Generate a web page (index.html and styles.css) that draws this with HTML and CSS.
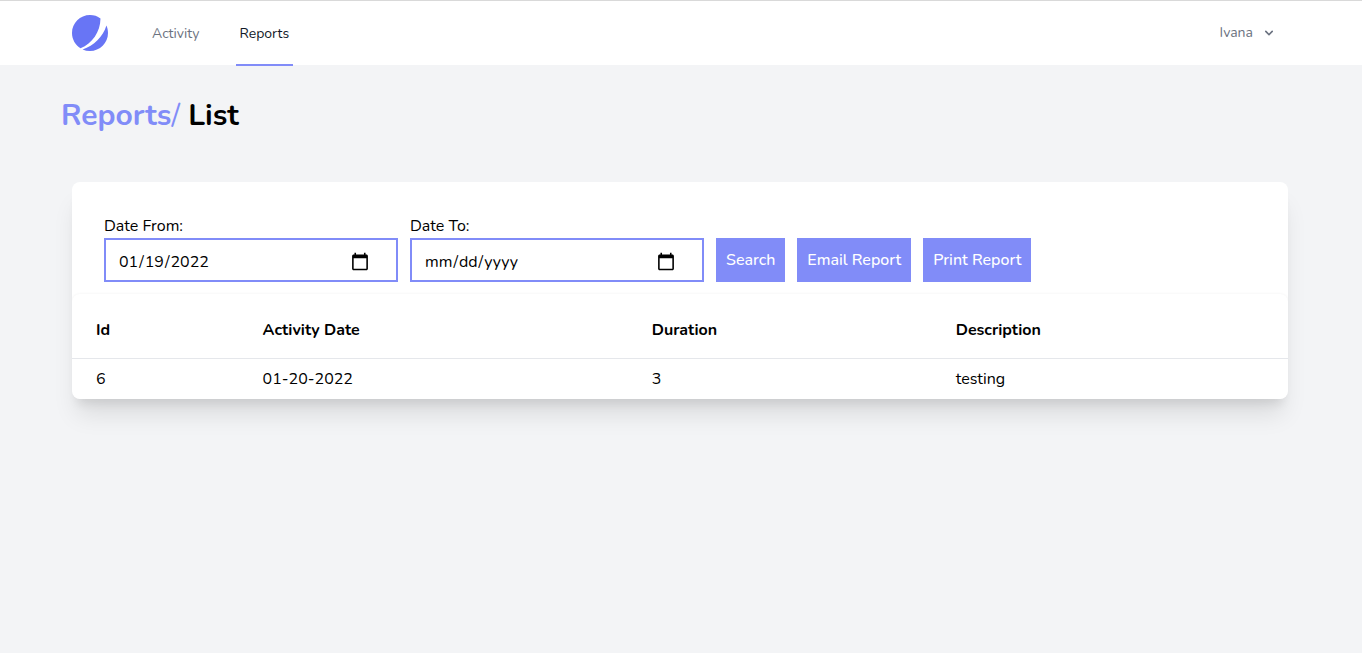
FILE: index.html
```html
<!DOCTYPE html>
<html lang="en-US">
<head>
<meta charset="utf-8">
<meta name="viewport" content="width=device-width, initial-scale=1">
<title>Reports</title>
<link rel="stylesheet" href="styles.css">
</head>
<body>
<nav class="nav">
  <div class="container nav-inner">
    <a class="logo" href="#" aria-label="Home">
      <svg viewBox="0 0 48 48" fill="#6875f5" aria-hidden="true">
        <path d="M11.395 44.428C4.557 40.198 0 32.632 0 24 0 10.745 10.745 0 24 0a23.891 23.891 0 0113.997 4.502c-.2 17.907-11.097 33.245-26.602 39.926z"/>
        <path d="M14.134 45.885A23.914 23.914 0 0024 48c13.255 0 24-10.745 24-24 0-3.516-.756-6.856-2.115-9.866-4.659 15.143-16.608 27.092-31.75 31.751z"/>
      </svg>
    </a>
    <div class="links">
      <a class="link" href="#">Activity</a>
      <a class="link active" href="#" aria-current="page">Reports</a>
    </div>
    <button class="user" type="button">Ivana
      <svg viewBox="0 0 20 20" fill="currentColor" aria-hidden="true"><path fill-rule="evenodd" clip-rule="evenodd" d="M5.293 7.293a1 1 0 011.414 0L10 10.586l3.293-3.293a1 1 0 111.414 1.414l-4 4a1 1 0 01-1.414 0l-4-4a1 1 0 010-1.414z"/></svg>
    </button>
  </div>
</nav>
<main>
  <div class="container">
    <h1 class="title"><span class="accent">Reports<span class="slash">/</span></span> List</h1>
    <section class="card">
      <form class="filters">
        <div class="field">
          <label for="from">Date From:</label>
          <input class="date" id="from" type="date" value="2022-01-19">
        </div>
        <div class="field">
          <label for="to">Date To:</label>
          <input class="date" id="to" type="date">
        </div>
        <button class="btn" type="button">Search</button>
        <button class="btn" type="button">Email Report</button>
        <button class="btn" type="button">Print Report</button>
      </form>
      <div class="table-wrap">
        <table class="table">
          <colgroup><col class="c-id"><col class="c-date"><col class="c-duration"><col></colgroup>
          <thead><tr><th scope="col">Id</th><th scope="col">Activity Date</th><th scope="col">Duration</th><th scope="col">Description</th></tr></thead>
          <tbody><tr><td>6</td><td>01-20-2022</td><td>3</td><td>testing</td></tr></tbody>
        </table>
      </div>
    </section>
  </div>
</main>
</body>
</html>
```
FILE: styles.css
```css
*, *::before, *::after { box-sizing: border-box; }
body {
  margin: 0;
  min-height: 100vh;
  background: #f3f4f6;
  color: #000;
  font: 400 16px/24px Nunito, Lato, sans-serif;
}
button, input { font: inherit; color: inherit; }
.container { max-width: 1280px; margin: 0 auto; padding: 0 33px 0 31px; }
.nav { background: #fff; border-top: 1px solid #d9d9d9; }
.nav-inner { display: flex; align-items: center; height: 64px; }
.logo { display: block; width: 36px; height: 36px; }
.logo svg { display: block; }
.links { display: flex; align-self: flex-start; gap: 32px; margin-left: 40px; }
.link {
  display: flex;
  align-items: center;
  height: 65px;
  padding: 2px 4px 0;
  border-bottom: 2px solid transparent;
  color: #6b7280;
  font-size: 14px;
  line-height: 20px;
  text-decoration: none;
}
.link.active { color: #111827; border-color: #818cf8; }
.user {
  display: flex;
  align-items: center;
  gap: 8px;
  margin-left: auto;
  padding: 0 11px 0 0;
  border: 0;
  background: none;
  color: #6b7280;
  font-size: 14px;
  line-height: 20px;
}
.user svg { width: 16px; height: 16px; }
.title { margin: 33px 0 48px -11px; font-size: 30px; line-height: 36px; font-weight: 700; }
.accent { color: #818cf8; }
.slash { font-weight: 400; }
.card {
  overflow: hidden;
  border-radius: 8px;
  background: #fff;
  box-shadow: 0 20px 25px -5px rgba(0,0,0,.1), 0 10px 10px -5px rgba(0,0,0,.08);
}
.filters { display: flex; flex-wrap: wrap; align-items: flex-end; gap: 12px; padding: 32px 32px 12px; }
.field { display: flex; flex-direction: column; }
.date {
  width: 294px;
  height: 44px;
  padding: 10px 24px 6px 12px;
  border: 2px solid #818cf8;
  background: #fff;
}
.date::-webkit-calendar-picker-indicator { width: 20px; height: 20px; }
.btn {
  height: 44px;
  padding: 8px 10px;
  border: 0;
  background: #818cf8;
  color: #fff;
  font-weight: 500;
}
.table-wrap {
  overflow: hidden;
  border-radius: 8px;
  background: #fff;
  box-shadow: 0 0 3px rgba(0,0,0,.06);
}
.table { width: 100%; table-layout: fixed; border-collapse: collapse; }
.table th, .table td { padding: 8px 24px; text-align: left; }
.table th { padding: 24px 24px 16px; border-bottom: 1px solid #e5e7eb; font-weight: 700; }
.c-id { width: 13.7%; }
.c-date { width: 32%; }
.c-duration { width: 25%; }
```
